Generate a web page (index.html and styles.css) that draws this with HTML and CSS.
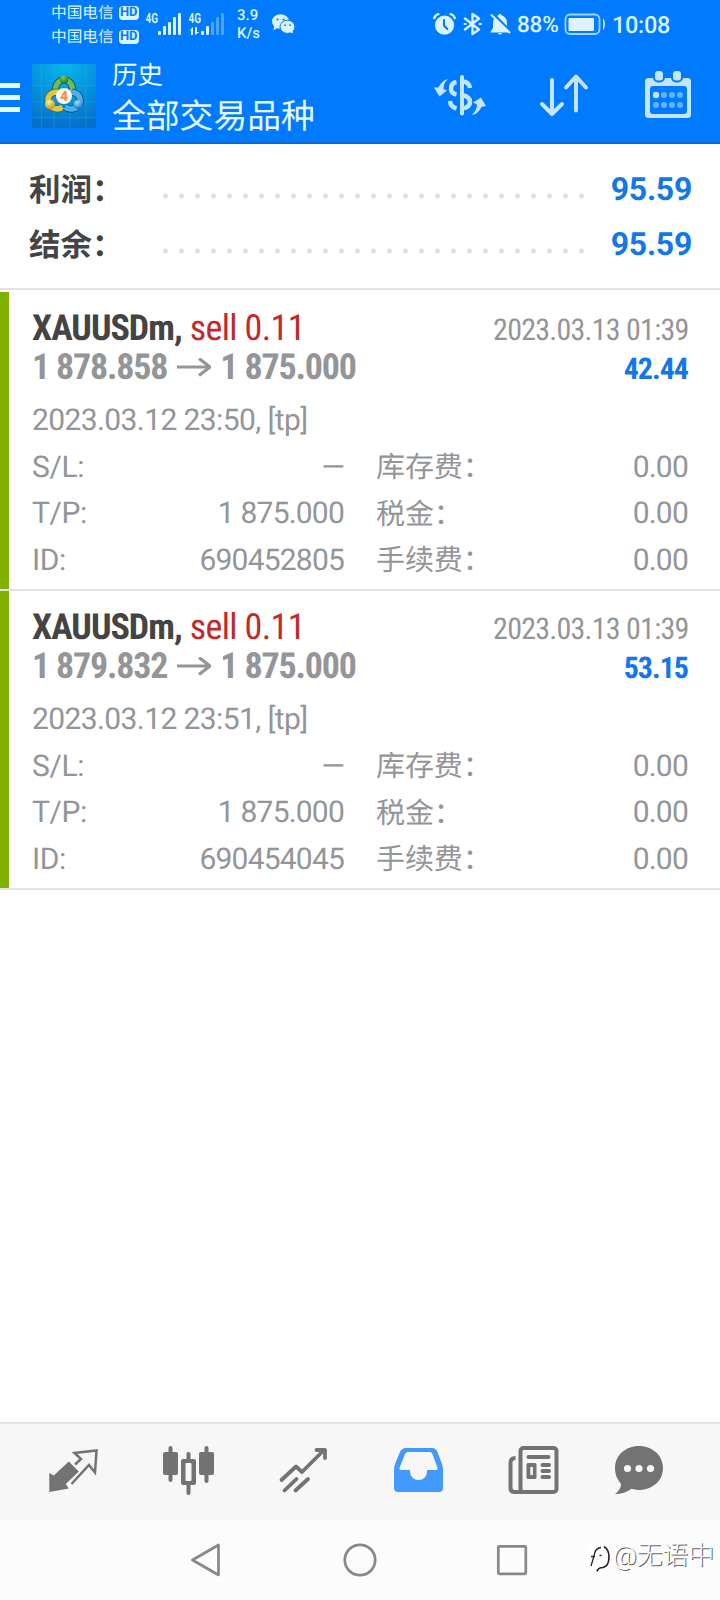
FILE: index.html
```html
<!DOCTYPE html>
<html lang="zh-CN">
<head>
<meta charset="utf-8">
<title>历史</title>
<link rel="stylesheet" href="styles.css">
</head>
<body>
<div class="screen">
  <header class="top">
    <div class="status">
      <div class="carriers">
        <div class="carrier">中国电信<span class="hd">HD</span></div>
        <div class="carrier">中国电信<span class="hd">HD</span></div>
      </div>
      <svg class="signals" viewBox="144 8 84 32" width="84" height="32">
        <g fill="#d9f3ff">
          <rect x="158" y="31" width="3" height="4" rx="1"/><rect x="163" y="26" width="3" height="9" rx="1"/><rect x="168" y="22" width="3" height="13" rx="1"/><rect x="173" y="17" width="3" height="18" rx="1"/><rect x="178" y="13" width="3" height="22" rx="1"/>
          <rect x="201" y="31" width="3" height="4" rx="1"/><rect x="206" y="26" width="3" height="9" rx="1"/>
          <g opacity=".35"><rect x="211" y="22" width="3" height="13" rx="1"/><rect x="216" y="17" width="3" height="18" rx="1"/><rect x="221" y="13" width="3" height="22" rx="1"/></g>
          <path d="M189 31l4-4v8h-2v-5zM195 27h2v5h2.500l-4.500 3z"/>
          <text x="145.500" y="23" class="gen" textLength="12.500" lengthAdjust="spacingAndGlyphs">4G</text>
          <text x="188.500" y="23" class="gen" textLength="12.500" lengthAdjust="spacingAndGlyphs">4G</text>
        </g>
      </svg>
      <div class="speed"><span>3.9</span><span>K/s</span></div>
      <svg class="wechat" viewBox="271 13 24 21" width="24" height="21">
        <ellipse cx="280.500" cy="21.500" rx="8.500" ry="7.300" fill="#d9f3ff"/><path d="M274 26l-.5 4.500 4-2.500z" fill="#d9f3ff"/>
        <ellipse cx="287.500" cy="26.800" rx="7.500" ry="6.600" fill="#d9f3ff" stroke="#007aff" stroke-width="1"/><path d="M289 31.500l4 2-.6-4z" fill="#d9f3ff"/>
        <g fill="#007aff"><circle cx="277.500" cy="19.500" r="1.100"/><circle cx="283.500" cy="19.500" r="1.100"/><circle cx="285" cy="25.200" r=".9"/><circle cx="290" cy="25.200" r=".9"/></g>
      </svg>
      <svg class="alerts" viewBox="432 11 80 26" width="80" height="26">
        <g fill="none" stroke="#d9f3ff" stroke-width="2" stroke-linecap="round">
          <circle cx="444.500" cy="25.200" r="9.600" fill="#d9f3ff" stroke="none"/>
          <path d="M434.300 18q1-3 4-3.800M454.700 18q-1-3-4-3.800" stroke-width="2.400"/>
          <path d="M444 20v5.500l3.300 3.500" stroke="#007aff"/>
          <path d="M465 18.500l14 11-6.500 4.500V14l6.500 4.500-14 11" stroke-linejoin="round" stroke-width="2.400"/>
          <path d="M464.500 24h1.200M479.500 24h1.500"/>
          <path d="M490 32.500l3-4.500v-5c0-4 3-7 5-7.500 1-2 3-2 4 0 3 1 5 4 5 7.500v5l3 4.500z" fill="#d9f3ff" stroke="none"/><path d="M498 33h4a2 1.500 0 0 1-4 0z" fill="#d9f3ff" stroke="none"/>
          <path d="M493 14l18 18" stroke="#007aff" stroke-width="3"/><path d="M491.500 15l18 17.500"/>
        </g>
      </svg>
      <span class="percent">88%</span>
      <svg class="battery" viewBox="564 13 42 23" width="42" height="23">
        <rect x="565.500" y="14.500" width="34" height="19.500" rx="4.500" fill="none" stroke="#a5d4ff" stroke-width="1.800"/><rect x="568.500" y="18" width="25.500" height="13" rx="1" fill="#dff3ff"/><path d="M603 18.500q2 1 2 5.700t-2 5.700z" fill="#b9dfff"/>
      </svg>
      <span class="clock">10:08</span>
    </div>
    <div class="bar">
      <div class="burger"><i></i><i></i><i></i></div>
      <svg class="logo" viewBox="0 0 64 64" width="64" height="64">
        <defs>
          <radialGradient id="sky" cx=".5" cy="0" r="1"><stop offset="0" stop-color="#06b6ee"/><stop offset=".55" stop-color="#0593dc"/><stop offset="1" stop-color="#0570c9"/></radialGradient>
          <radialGradient id="gr" cx=".4" cy=".25" r=".8"><stop offset="0" stop-color="#7ecb6a"/><stop offset="1" stop-color="#13702c"/></radialGradient>
          <radialGradient id="ye" cx=".4" cy=".25" r=".8"><stop offset="0" stop-color="#fff29a"/><stop offset="1" stop-color="#b58e12"/></radialGradient>
          <radialGradient id="bl" cx=".4" cy=".25" r=".8"><stop offset="0" stop-color="#a5e1ff"/><stop offset="1" stop-color="#0b68b8"/></radialGradient>
        </defs>
        <rect width="64" height="64" fill="url(#sky)"/>
        <path d="M9.500 0v64M22 0v64M38 0v64M54 0v64M0 21.500h64M0 38h64M0 53.500h64" stroke="#4cc3f0" stroke-opacity=".22" fill="none"/>
        <g fill="none">
          <path d="M23.500 29c-1-8 3-13 8.500-13s9.500 5 8.500 13" stroke="#0b5137" stroke-width="7"/>
          <path d="M23.500 29c-1-8 3-13 8.500-13s9.500 5 8.500 13" stroke="#6dbb66" stroke-width="5.500"/>
          <path d="M26 28c-9 0-11 6-9.500 11 2 5 9 8 14 4" stroke="#5e5917" stroke-width="7"/>
          <path d="M26 28c-9 0-11 6-9.500 11 2 5 9 8 14 4" stroke="#d9c948" stroke-width="5.500"/>
          <path d="M40 28c6 1 9 5 8 11-3 6-10 8-15 4" stroke="#064b87" stroke-width="7"/>
          <path d="M40 28c6 1 9 5 8 11-3 6-10 8-15 4" stroke="#4fb0e6" stroke-width="5.500"/>
        </g>
        <circle cx="32" cy="15.500" r="4.300" fill="url(#gr)"/><circle cx="18" cy="40.500" r="5" fill="url(#ye)"/><circle cx="46" cy="40.500" r="4.600" fill="url(#bl)"/>
        <circle cx="32" cy="32" r="8" fill="#fff8ed"/><text x="32" y="37" text-anchor="middle" class="four">4</text>
      </svg>
      <div class="titles"><div class="sub">历史</div><div class="main">全部交易品种</div></div>
      <svg class="actions" viewBox="430 66 265 56" width="265" height="56">
        <g fill="none" stroke="#c4e4ff" stroke-width="4" stroke-linecap="butt">
          <path d="M462 77v36.500" stroke-linecap="round"/>
          <path d="M456.500 82q-5.500 1-5.500 6.500 0 5 5.500 6M450 101q.5 6 6.500 7.500" stroke-width="4.500"/>
          <path d="M462 81.500q7 0 8 6.500M462 95q8 1.500 8 7t-8 6.500" stroke-width="4.500"/>
        </g>
        <g fill="#c4e4ff">
          <path d="M448 79q-6 1-9.500 8.500l-4.500 0 5.500 9 7.500-6-3.500-1.500q0-6 4.500-10z"/>
          <path d="M472 115q6-1 9.500-8l4.500-1-5-8.500-8 5 4 2q0 5-5 10.500z"/>
        </g>
        <g fill="none" stroke="#c4e4ff" stroke-width="4" stroke-linecap="round" stroke-linejoin="round"><path d="M552 80v34M542 104l10 10 10-10M576 110.500V77M566 87.500l10-11 10 11"/></g>
        <rect x="645" y="78" width="46" height="40" rx="3.500" fill="#c4e4ff"/><rect x="650" y="86" width="37" height="28" rx="3" fill="#007aff"/>
        <g fill="#c4e4ff" stroke="#007aff" stroke-width="2"><rect x="654" y="70" width="10" height="11.500" rx="4"/><rect x="672" y="70" width="10" height="11.500" rx="4"/></g>
        <circle cx="656" cy="95" r="3.200" fill="#c4e4ff"/>
        <g fill="#66b3ff"><circle cx="664" cy="95" r="3"/><circle cx="672" cy="95" r="3"/><circle cx="680" cy="95" r="3"/><circle cx="656" cy="105" r="3"/><circle cx="664" cy="105" r="3"/><circle cx="672" cy="105" r="3"/><circle cx="680" cy="105" r="3"/></g>
      </svg>
    </div>
  </header>

  <section class="summary">
    <div class="sum"><span class="label">利润：</span><span class="dots"></span><span class="total">95.59</span></div>
    <div class="sum"><span class="label">结余：</span><span class="dots"></span><span class="total">95.59</span></div>
  </section>

  <main class="deals">
    <article class="deal">
      <div class="head"><div class="pair"><b class="symbol">XAUUSDm,</b><span class="side">sell 0.11</span></div><span class="when">2023.03.13 01:39</span></div>
      <div class="head"><div class="prices"><span class="price">1 878.858</span><svg class="arrow" viewBox="0 0 35 20" width="35" height="20"><path d="M1 9h33M23 .5l11 8.500-11 8.500"/></svg><span class="price">1 875.000</span></div><b class="profit">42.44</b></div>
      <div class="opened">2023.03.12 23:50, [tp]</div>
      <div class="grid">
        <div class="cell"><span class="name">S/L:</span><span>—</span></div><div class="cell"><span class="cn">库存费：</span><span>0.00</span></div>
        <div class="cell"><span class="name">T/P:</span><span>1 875.000</span></div><div class="cell"><span class="cn">税金：</span><span>0.00</span></div>
        <div class="cell"><span class="name">ID:</span><span>690452805</span></div><div class="cell"><span class="cn">手续费：</span><span>0.00</span></div>
      </div>
    </article>
    <article class="deal">
      <div class="head"><div class="pair"><b class="symbol">XAUUSDm,</b><span class="side">sell 0.11</span></div><span class="when">2023.03.13 01:39</span></div>
      <div class="head"><div class="prices"><span class="price">1 879.832</span><svg class="arrow" viewBox="0 0 35 20" width="35" height="20"><path d="M1 9h33M23 .5l11 8.500-11 8.500"/></svg><span class="price">1 875.000</span></div><b class="profit">53.15</b></div>
      <div class="opened">2023.03.12 23:51, [tp]</div>
      <div class="grid">
        <div class="cell"><span class="name">S/L:</span><span>—</span></div><div class="cell"><span class="cn">库存费：</span><span>0.00</span></div>
        <div class="cell"><span class="name">T/P:</span><span>1 875.000</span></div><div class="cell"><span class="cn">税金：</span><span>0.00</span></div>
        <div class="cell"><span class="name">ID:</span><span>690454045</span></div><div class="cell"><span class="cn">手续费：</span><span>0.00</span></div>
      </div>
    </article>
  </main>

  <nav class="tabs">
    <svg viewBox="16 1424 115 96" width="115" height="96"><path d="M49.300 1473l4.500 2.500 15-14 10 10-13 12.500 3 4.500-19.500 3.500z" fill="#737373"/><path d="M75 1464.500l6-5.500-6.500-6 22-2.500-1.500 22-6-7.500-17.500 19" fill="none" stroke="#737373" stroke-width="2.500"/></svg>
    <svg viewBox="131 1424 115 96" width="115" height="96"><g fill="#737373"><rect x="163" y="1452" width="15" height="23" rx="2"/><rect x="168.500" y="1446" width="4" height="36" rx="2"/><rect x="199" y="1452" width="15" height="23" rx="2"/><rect x="204.500" y="1446" width="4" height="37" rx="2"/><rect x="181" y="1459" width="15" height="26" rx="2"/><rect x="186.500" y="1452" width="4" height="43" rx="2"/></g><rect x="185.500" y="1463" width="6" height="18" rx="1" fill="#f7f7f7"/></svg>
    <svg viewBox="246 1424 115 96" width="115" height="96"><path d="M281.500 1480l14.500-13.500 6 5.500 22-22M316.500 1450h8.500v8M284.500 1490.500l12-11.500M295.500 1490.500l12.500-11.500" fill="none" stroke="#737373" stroke-width="3.800" stroke-linecap="round" stroke-linejoin="round"/></svg>
    <svg viewBox="361 1424 115 96" width="115" height="96"><path fill-rule="evenodd" fill="#429aff" d="M406 1448h26q4 0 5.500 4l4.500 12q1 3 1 6v18q0 4-4 4h-41q-4 0-4-4v-18q0-3 1-6l5-12q2-4 6-4zm2 4q-2 0-3 2l-5.500 14q-.5 2 2 2h8.500v2a8.500 8 0 0 0 17 0v-2h8.500q2.500 0 2-2l-5-14q-1-2-3-2z"/></svg>
    <svg viewBox="476 1424 115 96" width="115" height="96"><g fill="none" stroke="#737373" stroke-width="4" stroke-linejoin="round"><rect x="520.500" y="1448" width="36" height="44" rx="3"/><path d="M515.500 1458q-5 0-5 5v25q0 4 4 4h8"/><path d="M528.500 1457h20M542.500 1465h6.500M542.500 1471h6.500M542.500 1477h6.500" stroke-linecap="round"/></g><rect x="526.500" y="1463" width="10" height="16" rx="1.500" fill="#737373"/><rect x="530.300" y="1467" width="2.600" height="8" fill="#f7f7f7"/></svg>
    <svg viewBox="591 1424 115 96" width="115" height="96"><path d="M639 1446c13.500 0 24 9.500 24 22s-10.500 22-24 22c-3 0-5-.5-7.500-1.200-4.500 3.500-10 5.200-16.500 5.200 4-3 6-6 6-10.200-3.500-4-6-9-6-15.800 0-12.500 10.500-22 24-22z" fill="#737373"/><g fill="#f7f7f7"><circle cx="627.500" cy="1468.500" r="3.600"/><circle cx="639" cy="1468.500" r="3.600"/><circle cx="650.500" cy="1468.500" r="3.600"/></g></svg>
  </nav>

  <footer class="system">
    <svg viewBox="190 1540 340 40" width="340" height="40"><g fill="none" stroke="#888" stroke-width="2.700" stroke-linejoin="round"><path d="M192.500 1560l26-15v30z"/><circle cx="360" cy="1560" r="15.200"/><rect x="498.300" y="1546.300" width="27.500" height="27.500" rx="1"/></g></svg>
    <div class="mark">
      <svg viewBox="583 1540 30 34" width="30" height="34"><rect x="585" y="1543" width="25" height="26" rx="9" fill="#fff"/><g fill="none" stroke="#222" stroke-width="1.300"><path d="M591 1566l3-10q1-8 7-8.500M591 1556.500h4M599.500 1555.500h2"/><path d="M604 1546.500q5 3 5 10.500 0 9-6 10.500-5 0-6 4" stroke-width="1.600"/></g></svg>
      <span>@无语中</span>
    </div>
  </footer>
</div>
</body>
</html>
```

FILE: styles.css
```css
* { box-sizing: border-box; }
body { margin: 0; background: #fff; font-family: Roboto, "Noto Sans CJK SC", sans-serif; text-rendering: geometricPrecision; }
svg { display: block; flex: none; }
.screen { width: 720px; height: 1600px; display: flex; flex-direction: column; overflow: hidden; }

.top { height: 144px; background: #007aff; border-bottom: 2px solid #0a6cd8; color: #e6faff; }
.status { height: 48px; display: flex; align-items: flex-start; color: #d9f3ff; }
.carriers { margin-left: 51px; width: 93px; padding-top: 1px; }
.carrier { display: flex; align-items: center; height: 24px; font-size: 15.7px; line-height: 24px; white-space: nowrap; }
.hd { margin-left: 5px; width: 20px; height: 14px; border-radius: 4px; background: #d9f3ff; color: #007aff; font: 700 13px/14px Roboto, sans-serif; text-align: center; }
.signals { margin-top: 8px; }
.gen { font: 700 14px Roboto, sans-serif; }
.speed { width: 34px; margin-left: 4px; padding: 6px 0 0 5px; display: flex; flex-direction: column; font-size: 15px; line-height: 18px; font-weight: 500; }
.speed span { white-space: nowrap; }
.wechat { margin: 13px 0 0 5px; }
.alerts { margin: 11px 0 0 137px; }
.percent { margin-left: 5px; width: 46px; font-size: 22.500px; line-height: 50px; font-weight: 500; letter-spacing: -.2px; }
.battery { margin: 13px 0 0 1px; }
.clock { margin-left: 6px; font-size: 23.500px; line-height: 50px; font-weight: 500; letter-spacing: -.3px; }

.bar { display: flex; height: 94px; }
.burger { width: 20px; margin: 35px 12px 0 0; display: flex; flex-direction: column; gap: 7px; }
.burger i { height: 5px; background: #e6faff; }
.logo { margin-top: 16px; }
.four { font: 700 14px Roboto, sans-serif; fill: #f08b3e; }
.titles { margin: 13px 0 0 16px; width: 318px; white-space: nowrap; }
.sub { font-size: 25.500px; line-height: 30px; }
.main { font-size: 33.800px; line-height: 54px; }
.actions { margin-top: 18px; }

.summary { height: 146px; padding: 17px 28px 0 29px; border-bottom: 2px solid #e2e2e2; }
.sum { height: 55px; display: flex; align-items: center; }
.label { width: 134px; font-size: 31.500px; font-weight: 700; color: #444; white-space: nowrap; line-height: 55px; padding-top: 3px; }
.dots { width: 424px; height: 6px; margin-top: 14px; background: radial-gradient(circle at 2.500px 3px, #e2e2e2 2.300px, transparent 2.900px) 0 0 / 16px 6px repeat-x; }
.total { flex: 1; text-align: right; font-size: 32px; font-weight: 700; color: #1377ea; letter-spacing: -.3px; }

.deals { padding-top: 2px; flex: 1; }
.deal { height: 299px; padding: 17px 32px 0 32px; border-bottom: 2px solid #e2e2e2; background: linear-gradient(#80b000, #80b000) 0 0 / 9px 100% no-repeat; color: #949599; white-space: nowrap; font-size: 30px; letter-spacing: -.8px; }
.head { display: flex; justify-content: space-between; align-items: baseline; height: 39px; line-height: 39px; letter-spacing: -.75px; font-stretch: 75%; font-family: "Roboto Condensed", Roboto, sans-serif; }
.pair { font-size: 36px; color: #444; display: flex; gap: 8px; letter-spacing: -1px; }
.side { color: #c52828; letter-spacing: -.65px; }
.symbol, .profit { font-weight: 700; }
.prices { display: flex; align-items: center; gap: 9px; font-size: 36px; font-weight: 700; letter-spacing: -1.200px; }
.price { position: relative; top: -.5px; }
.arrow path { fill: none; stroke: #949599; stroke-width: 3.200; }
.when { margin-right: -.5px; }
.profit { color: #1377ea; letter-spacing: -1px; }
.opened { margin-top: 10.500px; line-height: 46.500px; letter-spacing: -.6px; }
.grid { display: grid; grid-template-columns: 312px 312px; column-gap: 32px; padding-top: .5px; }
.cell { display: flex; justify-content: space-between; align-items: baseline; line-height: 46.500px; height: 46.500px; }
.name { letter-spacing: -.4px; }
.cn { font-size: 29px; letter-spacing: -.1px; position: relative; top: .5px; }

.tabs { height: 98px; border-top: 2px solid #e2e2e2; background: #f7f7f7; display: flex; padding-left: 16px; }
.system { height: 80px; background: #fcfcfc; display: flex; padding: 20px 0 0 190px; }
.mark { display: flex; margin-left: 53px; white-space: nowrap; }
.mark span { font-size: 26px; line-height: 32px; font-weight: 300; color: #fff; text-shadow: 1px 1px 0 #555; letter-spacing: -.2px; }
```
